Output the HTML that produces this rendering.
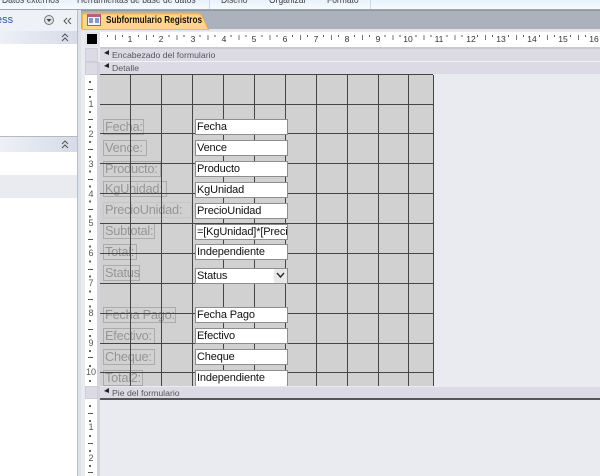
<!DOCTYPE html>
<html><head><meta charset="utf-8"><style>
html,body{margin:0;padding:0;background:#fff}
#p{position:relative;width:600px;height:476px;overflow:hidden;background:#e9ebf0;font-family:"Liberation Sans",sans-serif;filter:blur(.35px)}
#p div{position:absolute;box-sizing:border-box}
.t{white-space:nowrap}
.r{top:-5px;font-size:10px;color:#444;white-space:nowrap;transform:scaleX(.85);transform-origin:left top}
.v{top:75px;height:311px;width:1px;background:#454545}
.h{left:100px;width:333px;height:1px;background:#454545}
.l{left:103px;height:16px;border:1.5px solid #ababab;color:#969696;font-size:12.8px;letter-spacing:-.25px;line-height:14px;padding-left:1px;white-space:nowrap}
.f{left:195px;width:93px;height:16px;background:#fff;border:1px solid #8e8e8e;color:#111;font-size:11px;letter-spacing:-.15px;line-height:14px;padding-left:1px;white-space:nowrap;overflow:hidden}
.n{top:35px;font-size:8.5px;line-height:9px;color:#333;width:14px;text-align:center}
.y{left:84px;width:14px;text-align:center;font-size:9px;color:#555}
.m{left:88px;width:5px;height:1px;background:#555}
.b{left:100px;width:500px;background:#dcdbe5;color:#555;font-size:8.7px;line-height:12px;padding-left:12px;white-space:nowrap}
.g{left:85px;width:13px;background:#dcdbe5;border:1px solid #cfced8}
</style></head><body><div id="p">
<!-- ribbon -->
<div style="left:0;top:0;width:600px;height:10px;background:linear-gradient(#e9f1fb,#f7fbff)"></div>
<div class="r" style="left:2px">Datos externos</div>
<div class="r" style="left:77px">Herramientas de base de datos</div>
<div class="r" style="left:221px">Diseño</div>
<div class="r" style="left:269px">Organizar</div>
<div class="r" style="left:327px">Formato</div>
<div style="left:209px;top:0;width:1px;height:10px;background:#cfd6e6"></div>
<div style="left:370px;top:0;width:1px;height:10px;background:#cfd6e6"></div>
<div style="left:0;top:9px;width:600px;height:1px;background:#9ea7b0"></div>
<!-- nav pane -->
<div style="left:0;top:10px;width:78px;height:466px;background:#fff"></div>
<div style="left:0;top:10px;width:78px;height:21px;background:#eef1f6"></div>
<div style="left:0;top:31px;width:78px;height:13px;background:linear-gradient(90deg,#eef0f6,#d6dbe8)"></div>
<div class="t" style="left:-4px;top:14px;font-size:11px;color:#2c5c9e">ess</div>
<div style="left:44px;top:15px;width:10px;height:10px;border-radius:50%;border:1px solid #777;background:#dfe2e8"></div>
<svg style="position:absolute;left:46px;top:18px" width="6" height="5"><path d="M0.5 1L3 4L5.5 1Z" fill="#444"/></svg>
<svg style="position:absolute;left:63px;top:17px" width="9" height="8"><path d="M4 1L1 4L4 7M8 1L5 4L8 7" fill="none" stroke="#555"/></svg>
<svg style="position:absolute;left:61px;top:33px" width="8" height="9"><path d="M1 4L4 1L7 4M1 8L4 5L7 8" fill="none" stroke="#555"/></svg>
<div style="left:0;top:136px;width:78px;height:1px;background:#b5b9c2"></div>
<div style="left:0;top:137px;width:78px;height:15px;background:linear-gradient(90deg,#eef0f6,#d6dbe8)"></div>
<svg style="position:absolute;left:61px;top:140px" width="8" height="9"><path d="M1 4L4 1L7 4M1 8L4 5L7 8" fill="none" stroke="#555"/></svg>
<div style="left:0;top:175px;width:78px;height:23px;background:#e9ebf0"></div>
<div style="left:77px;top:10px;width:1px;height:466px;background:#b8bcc4"></div>
<div style="left:78px;top:10px;width:3px;height:466px;background:#dfe2e8"></div>
<!-- document frame -->
<div style="left:81px;top:10px;width:519px;height:20px;background:#abb2bc"></div>
<div style="left:81px;top:10px;width:519px;height:1px;background:#8e979f"></div>
<div style="left:81px;top:29px;width:519px;height:2px;background:#e4e6ec"></div>
<svg style="position:absolute;left:82px;top:12px" width="127" height="18"><path d="M0 18V3Q0 1 2 1H116Q119 1 121 5L127 18Z" fill="#fbc66f" stroke="#d9a860"/><path d="M1 3H115Q118 3 120 6L125 17H1Z" fill="#fdd68e"/></svg>
<div style="left:87px;top:14px;width:14px;height:12px;background:#f5f2f8;border:1px solid #a75a78;border-top:3px solid #b85f80"></div>
<div style="left:89px;top:18px;width:4px;height:5px;background:#7f9bc8"></div>
<div style="left:95px;top:18px;width:4px;height:5px;background:#7f9bc8"></div>
<div class="t" style="left:106px;top:14px;font-size:10.5px;font-weight:bold;color:#1a1408;transform:scaleX(.78);transform-origin:left top">Subformulario Registros</div>
<!-- ruler -->
<div style="left:85px;top:32px;width:515px;height:15px;background:#fff"></div>
<div style="left:85px;top:32px;width:15px;height:15px;background:#e3e5ea"></div>
<div style="left:87px;top:34px;width:10px;height:10px;background:#000"></div>
<div style="left:100px;top:47px;width:500px;height:2px;background:#c9c9d0"></div>
<div class="n" style="left:123px">1</div><div class="n" style="left:154px">2</div><div class="n" style="left:186px">3</div><div class="n" style="left:217px">4</div><div class="n" style="left:247px">5</div><div class="n" style="left:278px">6</div><div class="n" style="left:309px">7</div><div class="n" style="left:340px">8</div><div class="n" style="left:371px">9</div><div class="n" style="left:401px">10</div><div class="n" style="left:432px">11</div><div class="n" style="left:464px">12</div><div class="n" style="left:494px">13</div><div class="n" style="left:525px">14</div><div class="n" style="left:556px">15</div><div class="n" style="left:587px">16</div>
<div style="left:100px;top:35px;width:500px;height:5px;background:repeating-linear-gradient(90deg,transparent 0,transparent 15px,#777 15px,#777 16px,transparent 16px,transparent 30.85px)"></div>
<div style="left:100px;top:35px;width:500px;height:2px;background:repeating-linear-gradient(90deg,transparent 0,transparent 7px,#555 7px,#555 8px,transparent 8px,transparent 22px,#555 22px,#555 23px,transparent 23px,transparent 30.85px)"></div>
<!-- left vertical ruler -->
<div style="left:85px;top:75px;width:12px;height:401px;background:#fff"></div>
<div style="left:97px;top:62px;width:3px;height:414px;background:#d4d4dc"></div>
<div style="left:89px;top:75px;width:2px;height:311px;background:repeating-linear-gradient(180deg,transparent 0,transparent 6px,#666 6px,#666 8px,transparent 8px,transparent 21px,#666 21px,#666 23px,transparent 23px,transparent 29.9px)"></div>
<div style="left:89px;top:400px;width:2px;height:76px;background:repeating-linear-gradient(180deg,transparent 0,transparent 5px,#666 5px,#666 7px,transparent 7px,transparent 20px,#666 20px,#666 22px,transparent 22px,transparent 29.9px)"></div>
<div class="m" style="top:89px"></div><div class="m" style="top:119px"></div><div class="m" style="top:149px"></div><div class="m" style="top:179px"></div><div class="m" style="top:209px"></div><div class="m" style="top:239px"></div><div class="m" style="top:269px"></div><div class="m" style="top:299px"></div><div class="m" style="top:329px"></div><div class="m" style="top:357px"></div><div class="m" style="top:413px"></div><div class="m" style="top:443px"></div><div class="m" style="top:472px"></div>
<div class="y" style="top:99px">1</div><div class="y" style="top:129px">2</div><div class="y" style="top:159px">3</div><div class="y" style="top:189px">4</div><div class="y" style="top:218px">5</div><div class="y" style="top:248px">6</div><div class="y" style="top:278px">7</div><div class="y" style="top:308px">8</div><div class="y" style="top:338px">9</div><div class="y" style="top:367px">10</div><div class="y" style="top:422px">1</div><div class="y" style="top:453px">2</div>
<!-- section bands -->
<div class="g" style="top:48px;height:14px"></div>
<div class="g" style="top:62px;height:13px"></div>
<div class="g" style="top:386px;height:13px"></div>
<div class="b" style="top:49px;height:12px">Encabezado del formulario</div>
<div class="b" style="top:62px;height:12px">Detalle</div>
<div class="b" style="top:387px;height:12px">Pie del formulario</div>
<div style="left:100px;top:61px;width:500px;height:1px;background:#f3f3f6"></div>
<div style="left:100px;top:398px;width:500px;height:1.5px;background:#555"></div>
<svg style="position:absolute;left:104px;top:50px" width="6" height="7"><path d="M5 0V5L0 3Z" fill="#222"/></svg>
<svg style="position:absolute;left:104px;top:63px" width="6" height="7"><path d="M5 0V5L0 3Z" fill="#222"/></svg>
<svg style="position:absolute;left:104px;top:388px" width="6" height="7"><path d="M5 0V5L0 3Z" fill="#222"/></svg>
<!-- detail grid -->
<div style="left:100px;top:75px;width:333px;height:311px;background:#d1d1d1"></div>
<!-- labels -->
<div class="l" style="top:119px;width:41px">Fecha:</div>
<div class="l" style="top:140px;width:44px">Vence:</div>
<div class="l" style="top:161px;width:58px">Producto:</div>
<div class="l" style="top:181px;width:64px">KgUnidad:</div>
<div class="l" style="top:202px;width:89px;border-color:#c6c6c6">PrecioUnidad:</div>
<div class="l" style="top:223px;width:52px">Subtotal:</div>
<div class="l" style="top:244px;width:34px">Total:</div>
<div class="l" style="top:265px;width:37px">Status</div>
<div class="l" style="top:307px;width:73px">Fecha Pago:</div>
<div class="l" style="top:328px;width:52px">Efectivo:</div>
<div class="l" style="top:349px;width:52px">Cheque:</div>
<div class="l" style="top:370px;width:40px">Total2:</div>
<!-- grid lines -->
<div style="left:100px;top:74px;width:333px;height:1px;background:#444"></div>
<div class="h" style="top:104px"></div><div class="h" style="top:133px"></div><div class="h" style="top:163px"></div><div class="h" style="top:193px"></div><div class="h" style="top:223px"></div><div class="h" style="top:253px"></div><div class="h" style="top:283px"></div><div class="h" style="top:313px"></div><div class="h" style="top:343px"></div><div class="h" style="top:372px"></div>
<div class="v" style="left:130px"></div><div class="v" style="left:161px"></div><div class="v" style="left:192px"></div><div class="v" style="left:223px"></div><div class="v" style="left:254px"></div><div class="v" style="left:285px"></div><div class="v" style="left:316px"></div><div class="v" style="left:347px"></div><div class="v" style="left:378px"></div><div class="v" style="left:408px"></div><div class="v" style="left:433px"></div>
<!-- fields -->
<div class="f" style="top:119px">Fecha</div>
<div class="f" style="top:140px">Vence</div>
<div class="f" style="top:161px">Producto</div>
<div class="f" style="top:182px">KgUnidad</div>
<div class="f" style="top:203px">PrecioUnidad</div>
<div class="f" style="top:224px">=[KgUnidad]*[Precio</div>
<div class="f" style="top:244px">Independiente</div>
<div class="f" style="top:268px">Status</div>
<div style="left:274px;top:269px;width:13px;height:14px;background:#e9e9e9"></div>
<svg style="position:absolute;left:276px;top:272px" width="9" height="7"><path d="M1 1L4.5 5L8 1" fill="none" stroke="#333" stroke-width="1.5"/></svg>
<div class="f" style="top:307px">Fecha Pago</div>
<div class="f" style="top:328px">Efectivo</div>
<div class="f" style="top:349px">Cheque</div>
<div class="f" style="top:370px;height:16px;border-bottom:0">Independiente</div>
</div></body></html>
